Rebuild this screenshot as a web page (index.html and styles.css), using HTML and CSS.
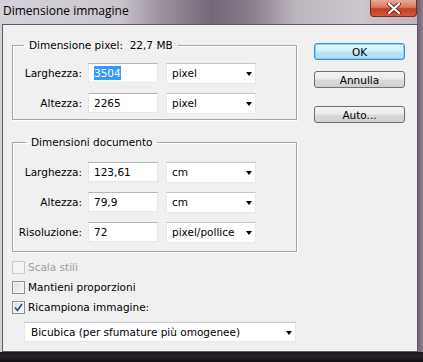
FILE: index.html
```html
<!DOCTYPE html>
<html lang="it">
<head>
    <meta charset="UTF-8">
    <title>Dimensione immagine</title>
    <link rel="stylesheet" href="styles.css">
</head>
<body>

<div class="window">
    <div class="titlebar">
        <span class="title">Dimensione immagine</span>
        <button class="close" aria-label="Chiudi">
            <svg width="14" height="11" viewBox="0 0 14 11">
                <path d="M2 1 L12 10 M12 1 L2 10" stroke="#6b2a20" stroke-width="4" stroke-linecap="round"/>
                <path d="M2 1 L12 10 M12 1 L2 10" stroke="#fff" stroke-width="2.2" stroke-linecap="round"/>
            </svg>
        </button>
    </div>

    <div class="client">
        <div class="main">
            <fieldset class="group group-pixel">
                <legend>Dimensione pixel:&nbsp; 22,7 MB</legend>
                <div class="row">
                    <label>Larghezza:</label>
                    <div class="field"><span class="selected">3504</span></div>
                    <div class="dropdown">pixel<span class="arrow"></span></div>
                </div>
                <div class="row">
                    <label>Altezza:</label>
                    <div class="field">2265</div>
                    <div class="dropdown">pixel<span class="arrow"></span></div>
                </div>
            </fieldset>

            <fieldset class="group group-doc">
                <legend>Dimensioni documento</legend>
                <div class="row">
                    <label>Larghezza:</label>
                    <div class="field">123,61</div>
                    <div class="dropdown">cm<span class="arrow"></span></div>
                </div>
                <div class="row">
                    <label>Altezza:</label>
                    <div class="field">79,9</div>
                    <div class="dropdown">cm<span class="arrow"></span></div>
                </div>
                <div class="row">
                    <label>Risoluzione:</label>
                    <div class="field">72</div>
                    <div class="dropdown">pixel/pollice<span class="arrow"></span></div>
                </div>
            </fieldset>

            <div class="checks">
                <div class="check disabled"><span class="box"></span>Scala stili</div>
                <div class="check"><span class="box"></span>Mantieni proporzioni</div>
                <div class="check"><span class="box checked">
                    <svg width="9" height="9" viewBox="0 0 9 9"><path d="M1 4.5 L3.5 7.5 L8 1" fill="none" stroke="#2b4a8c" stroke-width="1.6"/></svg>
                </span>Ricampiona immagine:</div>
            </div>

            <div class="dropdown wide">Bicubica (per sfumature più omogenee)<span class="arrow"></span></div>
        </div>

        <div class="buttons">
            <button class="btn default">OK</button>
            <button class="btn">Annulla</button>
            <button class="btn auto">Auto...</button>
        </div>
    </div>
</div>

</body>
</html>
```

FILE: styles.css
```css
body {
    margin: 0;
    padding: 0;
    font-family: "DejaVu Sans", sans-serif;
    font-size: 10.5px;
    color: #000;
}

.window {
    width: 423px;
    height: 362px;
    background:
        linear-gradient(to bottom, transparent 352px, #1c171c 352px, #2a222a 356px, #120f12 362px),
        linear-gradient(to right, transparent 417px, #6c6070 417px, #8d7f92 423px),
        linear-gradient(to right, #d4d1d8 0%, #cbc6cd 28%, #9c919d 38%, #75697a 50%, #8a7f8d 60%, #bdb7bf 70%, #cbc7cd 85%, #b9b3bc 100%);
    overflow: hidden;
}

.titlebar {
    height: 24px;
    display: flex;
    align-items: flex-start;
}

.title {
    font-family: "Open Sans", sans-serif;
    font-size: 12px;
    line-height: 21px;
    padding-left: 3px;
}

.close {
    margin-left: auto;
    margin-right: 6px;
    width: 47px;
    height: 17px;
    padding: 0;
    border: 1px solid #7a2a1e;
    border-top: none;
    border-radius: 0 0 4px 4px;
    background: linear-gradient(to bottom, #e9a898 0%, #d87a62 45%, #c23d22 55%, #d2583c 100%);
    display: flex;
    align-items: center;
    justify-content: center;
}

.client {
    margin-left: 2px;
    width: 416px;
    height: 328px;
    box-sizing: border-box;
    border: 1px solid #5e5a60;
    background-color: #f0f0f0;
    display: flex;
}

.main {
    width: 285px;
    margin-left: 9px;
    padding-top: 13px;
}

.group {
    margin: 0;
    padding: 11px 0 6px 0;
    border: 1px solid #a6a6a6;
    box-shadow: 1px 1px 0 #fff, inset 1px 1px 0 #fff;
}

.group legend {
    margin-left: 11px;
    padding: 0 5px;
    line-height: 14px;
}

.group-doc {
    margin-top: 15px;
    padding: 13px 0 9px 0;
}

.group-doc legend {
    margin-left: 13px;
}

.row {
    display: flex;
    align-items: center;
    height: 20px;
}

.row + .row {
    margin-top: 10px;
}

.row label {
    width: 69px;
    margin-right: 6px;
    text-align: right;
}

.field {
    width: 70px;
    height: 20px;
    box-sizing: border-box;
    padding: 0 5px;
    line-height: 18px;
    background-color: #fff;
    border: 1px solid #e3e6ea;
    border-top-color: #b4b6ba;
}

.selected {
    background-color: #3399ff;
    color: #fff;
    padding: 1px 0;
}

.dropdown {
    position: relative;
    width: 90px;
    height: 21px;
    margin-left: 8px;
    box-sizing: border-box;
    padding: 0 5px;
    line-height: 19px;
    background-color: #fff;
    border: 1px solid #e6e8ec;
    border-top-color: #c4c6ca;
}

.arrow {
    position: absolute;
    right: 3px;
    top: 8px;
    border-left: 3.5px solid transparent;
    border-right: 3.5px solid transparent;
    border-top: 4px solid #000;
}

.checks {
    margin-top: 5px;
}

.check {
    display: flex;
    align-items: center;
    height: 20px;
}

.check .box {
    width: 13px;
    height: 13px;
    box-sizing: border-box;
    margin-right: 3px;
    border: 1px solid #8e8f8f;
    background: linear-gradient(135deg, #dcdcdc, #fbfbfb);
    box-shadow: inset 0 0 0 1px #f4f4f4;
    display: flex;
    align-items: center;
    justify-content: center;
}

.check.disabled {
    color: #a0a0a0;
}

.check.disabled .box {
    border-color: #c8c8c8;
    background: #f4f4f4;
}

.dropdown.wide {
    width: 272px;
    margin: 5px 0 0 12px;
    height: 20px;
    line-height: 18px;
    padding-left: 6px;
}

.dropdown.wide .arrow {
    right: 3px;
    top: 8px;
}

.buttons {
    margin-left: 17px;
    padding-top: 18px;
    display: flex;
    flex-direction: column;
}

.btn {
    width: 91px;
    height: 17px;
    padding: 0;
    font-family: "DejaVu Sans", sans-serif;
    font-size: 10.5px;
    color: #000;
    border: 1px solid #707070;
    border-radius: 3px;
    background: linear-gradient(to bottom, #f4f4f4 0%, #ebebeb 48%, #dbdbdb 52%, #d0d0d0 100%);
}

.btn + .btn {
    margin-top: 11px;
}

.btn.default {
    border-color: #3c8fd8;
    background: linear-gradient(to bottom, #e9f7fd 0%, #d6effa 48%, #bfe4f6 52%, #a9dbf4 100%);
    box-shadow: inset 0 0 0 1px #7fd2f3;
}

.btn.auto {
    margin-top: 18px;
}
```
